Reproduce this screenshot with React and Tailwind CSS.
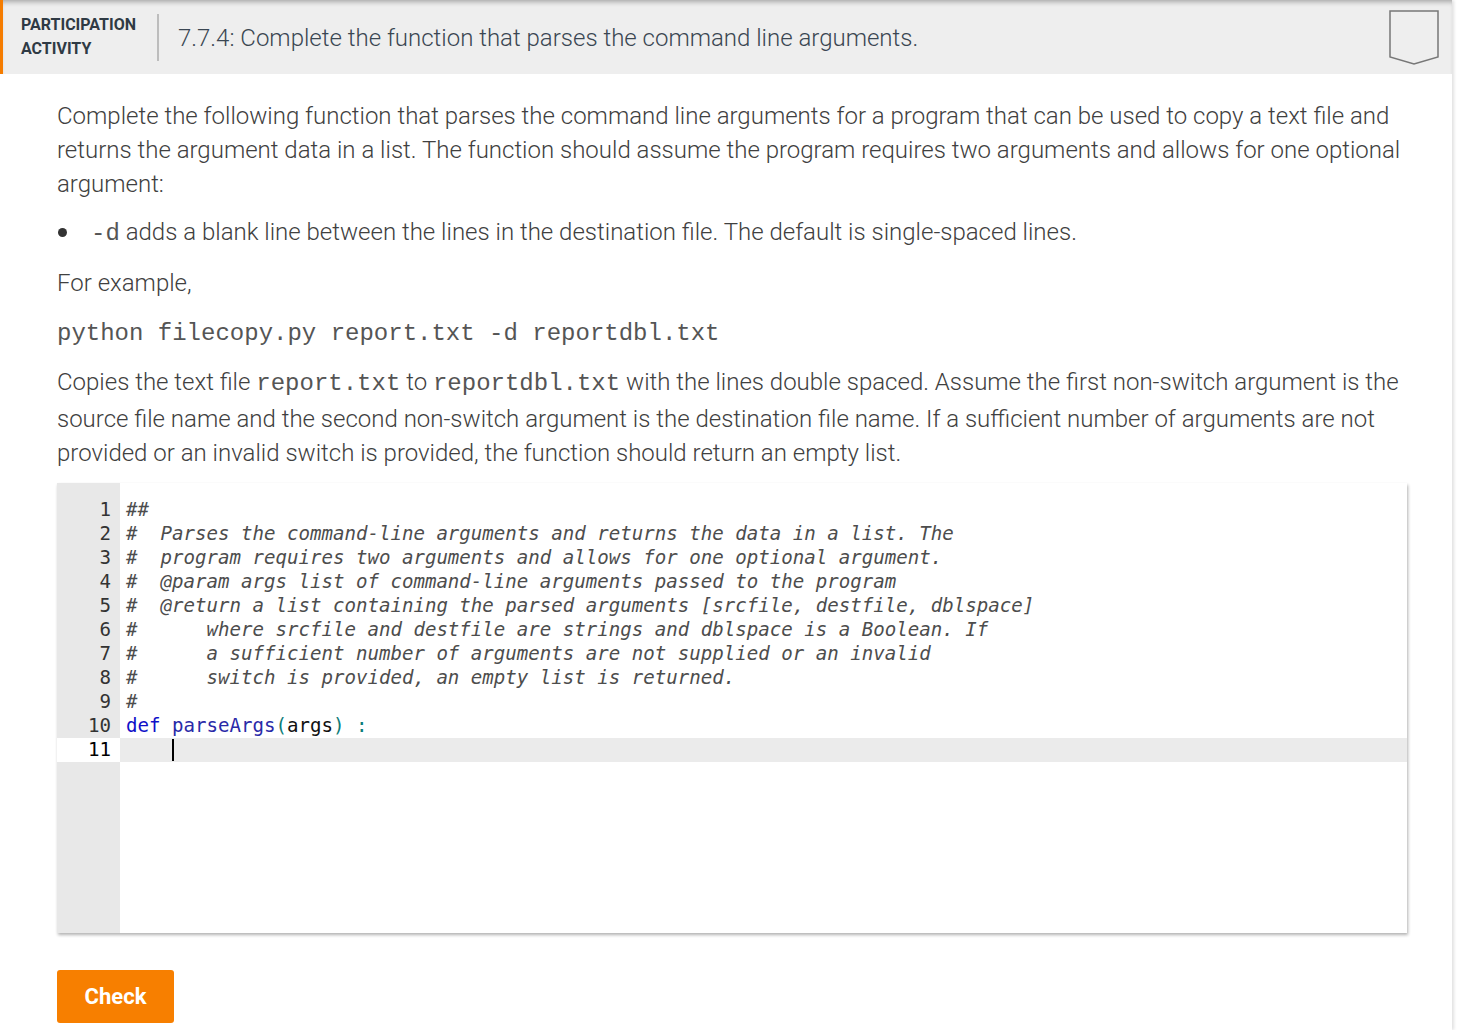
import { useState } from 'react';

const codeLines = [
  { n: 1, parts: [{ t: '##', c: 'cmt' }] },
  { n: 2, parts: [{ t: '#  Parses the command-line arguments and returns the data in a list. The', c: 'cmt' }] },
  { n: 3, parts: [{ t: '#  program requires two arguments and allows for one optional argument.', c: 'cmt' }] },
  { n: 4, parts: [{ t: '#  @param args list of command-line arguments passed to the program', c: 'cmt' }] },
  { n: 5, parts: [{ t: '#  @return a list containing the parsed arguments [srcfile, destfile, dblspace]', c: 'cmt' }] },
  { n: 6, parts: [{ t: '#      where srcfile and destfile are strings and dblspace is a Boolean. If', c: 'cmt' }] },
  { n: 7, parts: [{ t: '#      a sufficient number of arguments are not supplied or an invalid', c: 'cmt' }] },
  { n: 8, parts: [{ t: '#      switch is provided, an empty list is returned.', c: 'cmt' }] },
  { n: 9, parts: [{ t: '#', c: 'cmt' }] },
  {
    n: 10,
    parts: [
      { t: 'def', c: 'kw' },
      { t: ' ', c: '' },
      { t: 'parseArgs', c: 'fn' },
      { t: '(', c: 'paren' },
      { t: 'args', c: '' },
      { t: ')', c: 'paren' },
      { t: ' ', c: '' },
      { t: ':', c: 'paren' },
    ],
  },
  { n: 11, parts: [{ t: '    ', c: '' }], active: true },
];

const tokenClass = {
  cmt: 'italic text-[#4d4d4d]',
  kw: 'text-[#1010c8]',
  fn: 'text-[#2a2aa8]',
  paren: 'text-[#0c7c78]',
  '': 'text-[#111]',
};

function Badge() {
  return (
    <svg width="50" height="56" viewBox="0 0 50 56" className="shrink-0">
      <path d="M1 1 H49 V47 L25 54 L1 47 Z" fill="none" stroke="#777" strokeWidth="1.5" />
    </svg>
  );
}

function Mono({ children, tall }) {
  return (
    <code
      className={`font-['Liberation_Mono',monospace] text-[24px] font-normal text-[#555] ${tall ? 'leading-[36px]' : 'leading-none'}`}
    >
      {children}
    </code>
  );
}

export default function App() {
  const [code] = useState(codeLines);

  return (
    <div className="min-h-[1030px] bg-white font-['Roboto',sans-serif]">
      <div className="w-[1452px] min-h-[1030px] bg-white shadow-[2px_0_3px_rgba(0,0,0,0.12)]">
        {/* header */}
        <div className="h-[74px] bg-[#eeeeee] border-l-[3px] border-[#f57c00] flex items-center shadow-[inset_0_5px_5px_-3px_rgba(0,0,0,0.3)] pr-[13px]">
          <div className="pl-[18px] w-[154px] text-[16px] font-bold leading-[24px] text-[#2f3a44]">
            PARTICIPATION
            <br />
            ACTIVITY
          </div>
          <div className="w-[2px] h-[47px] bg-[#bdbdbd]" />
          <div className="ml-[19px] flex-1 text-[24px] font-light text-[#3a4652] pt-[2px]">
            7.7.4: Complete the function that parses the command line arguments.
          </div>
          <div className="pt-[1px]">
            <Badge />
          </div>
        </div>

        {/* body */}
        <div className="pl-[57px] pr-[45px] pt-[25px] text-[24px] font-light text-[#404040] leading-[34px]">
          <p>
            Complete the following function that parses the command line arguments for a program that can be used to copy a text file and
            returns the argument data in a list. The function should assume the program requires two arguments and allows for one optional
            argument:
          </p>
          <div className="mt-[14px] flex">
            <span className="w-[34px] shrink-0 flex items-center h-[34px] pl-[1px]">
              <span className="w-[9px] h-[9px] rounded-full bg-[#333]" />
            </span>
            <p>
              <Mono>-d</Mono> adds a blank line between the lines in the destination file. The default is single-spaced lines.
            </p>
          </div>
          <p className="mt-[17px]">For example,</p>
          <p className="mt-[15px]">
            <Mono>python filecopy.py report.txt -d reportdbl.txt</Mono>
          </p>
          <p className="mt-[16px]">
            Copies the text file <Mono tall>report.txt</Mono> to <Mono tall>reportdbl.txt</Mono> with the lines double spaced. Assume the
            first non-switch argument is the source file name and the second non-switch argument is the destination file name. If a
            sufficient number of arguments are not provided or an invalid switch is provided, the function should return an empty list.
          </p>

          {/* editor */}
          <div className="mt-[13px] w-[1350px] h-[450px] bg-white flex shadow-[1px_2px_3px_rgba(0,0,0,0.3)] font-['DejaVu_Sans_Mono',monospace] text-[19.1px] leading-[24px] font-normal">
            <div className="w-[63px] bg-[#e8e8e8] pt-[15px]">
              {code.map((line) => (
                <div
                  key={line.n}
                  className={`h-[24px] pr-[9px] text-right ${line.active ? 'bg-white text-black' : 'text-[#333]'}`}
                >
                  {line.n}
                </div>
              ))}
            </div>
            <div className="flex-1 pt-[15px]">
              {code.map((line) => (
                <div
                  key={line.n}
                  className={`h-[24px] pl-[6px] whitespace-pre flex items-center ${line.active ? 'bg-[#ebebeb]' : ''}`}
                >
                  {line.parts.map((p, i) => (
                    <span key={i} className={tokenClass[p.c]}>
                      {p.t}
                    </span>
                  ))}
                  {line.active && <span className="inline-block w-[2px] h-[22px] bg-black" />}
                </div>
              ))}
            </div>
          </div>

          <button className="mt-[37px] w-[117px] h-[53px] rounded-[3px] bg-[#f77f00] text-white text-[22px] font-bold">
            Check
          </button>
        </div>
      </div>
    </div>
  );
}
